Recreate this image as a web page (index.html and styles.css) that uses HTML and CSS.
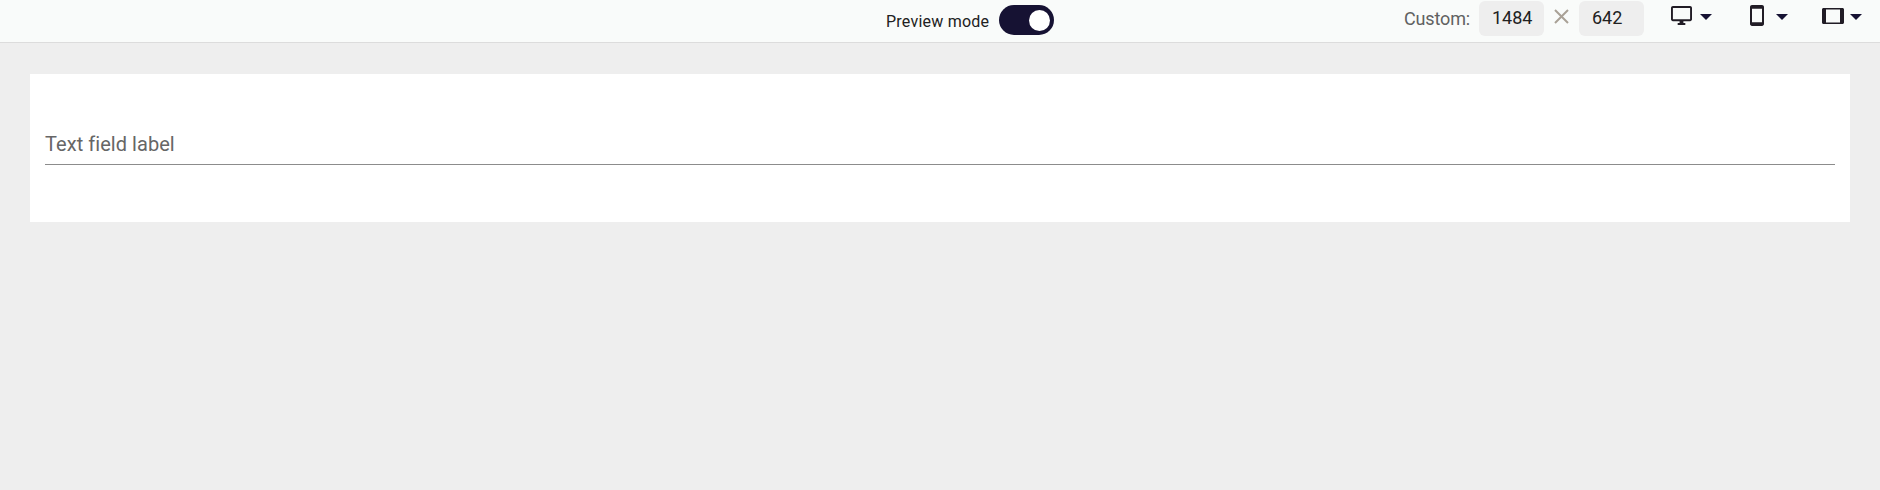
FILE: index.html
```
<!DOCTYPE html>
<html lang="en">
<head>
<meta charset="utf-8">
<title>Preview</title>
<link rel="stylesheet" href="styles.css">
</head>
<body>
<header class="toolbar">
  <div class="preview">
    <span class="preview-label">Preview mode</span>
    <span class="toggle" role="switch" aria-checked="true"><span class="knob"></span></span>
  </div>
  <div class="sizes">
    <span class="custom">Custom:</span>
    <span class="size">1484</span>
    <svg class="times" viewBox="0 0 15 15"><path d="M1 1l13 13M14 1L1 14"/></svg>
    <span class="size">642</span>
    <div class="device desktop">
      <svg width="21" height="19" viewBox="1 2 22 20" preserveAspectRatio="none"><path d="M21 2H3c-1.1 0-2 .9-2 2v12c0 1.1.9 2 2 2h7v2H8v2h8v-2h-2v-2h7c1.1 0 2-.9 2-2V4c0-1.1-.9-2-2-2zm0 14H3V4h18v12z"/></svg>
      <span class="caret"></span>
    </div>
    <div class="device phone">
      <svg width="14" height="21" viewBox="5 1 14 22" preserveAspectRatio="none"><path d="M17 1H7c-1.1 0-2 .9-2 2v18c0 1.1.9 2 2 2h10c1.1 0 2-.9 2-2V3c0-1.1-.9-2-2-2zm0 18H7V5h10v14z"/></svg>
      <span class="caret"></span>
    </div>
    <div class="device tablet">
      <svg width="22" height="16" viewBox="0 0 22 16"><path d="M20.500 0H1.500C.7 0 0 .7 0 1.500v13c0 .8.7 1.500 1.500 1.500h19c.8 0 1.500-.7 1.500-1.500v-13c0-.8-.7-1.500-1.500-1.500zM18 14.500H4V1.500h14v13z"/></svg>
      <span class="caret"></span>
    </div>
  </div>
</header>
<main class="stage">
  <section class="card">
    <div class="field">Text field label</div>
  </section>
</main>
</body>
</html>
```
FILE: styles.css
```
* { box-sizing: border-box; }
body {
  margin: 0;
  min-height: 490px;
  background: #eee;
  font-family: Roboto, sans-serif;
  color: #212121;
}
.toolbar {
  display: flex;
  justify-content: space-between;
  height: 43px;
  padding-left: 886px;
  padding-right: 18px;
  background: #f9fbfa;
  border-bottom: 1px solid #dcdcdc;
}
.preview { display: flex; padding-top: 5px; }
.preview-label {
  width: 113px;
  font-size: 16px;
  line-height: 34px;
  letter-spacing: 0.22px;
  white-space: nowrap;
}
.toggle {
  display: flex;
  align-items: center;
  justify-content: flex-end;
  width: 55px;
  height: 30px;
  padding-right: 4px;
  border-radius: 15px;
  background: #161233;
}
.knob { width: 21px; height: 21px; border-radius: 50%; background: #fff; }
.sizes { display: flex; padding-top: 1px; font-size: 18px; line-height: 35px; }
.custom { width: 75px; color: #616161; letter-spacing: -0.15px; white-space: nowrap; }
.size {
  width: 65px;
  height: 35px;
  padding-left: 13px;
  line-height: 34px;
  border-radius: 6px;
  background: #eee;
}
.times {
  width: 15px;
  height: 15px;
  margin: 8px 10px 0;
  fill: none;
  stroke: #a9a196;
  stroke-width: 2;
}
.device { display: flex; align-items: center; height: 29px; }
.device svg { fill: #211c25; }
.desktop { margin-left: 27px; gap: 8px; }
.phone { margin-left: 38px; gap: 12px; }
.tablet { margin-left: 34px; gap: 6px; }
.caret {
  border: 6px solid transparent;
  border-top-color: #161233;
  border-bottom: 0;
  margin-top: 2px;
}
.stage { padding: 31px 30px 0; }
.card { height: 148px; padding: 43px 15px 0; background: #fff; }
.field {
  height: 48px;
  border-bottom: 1px solid #8c8c8c;
  font-size: 20px;
  line-height: 54px;
  letter-spacing: 0.05px;
  color: #666;
}
```
